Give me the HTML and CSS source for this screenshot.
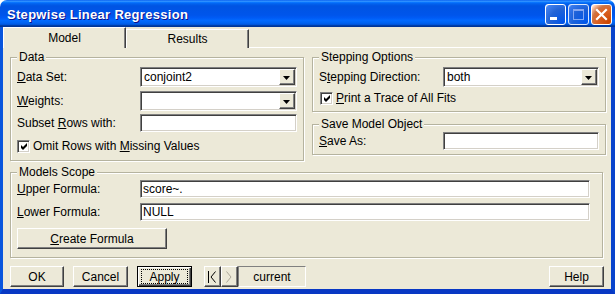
FILE: index.html
```html
<!DOCTYPE html>
<html>
<head>
<meta charset="utf-8">
<link rel="stylesheet" href="styles.css">
</head>
<body>
<div class="window">
  <div class="titlebar">
    <span class="title">Stepwise Linear Regression</span>
    <div class="caption">
      <span class="cbtn min"><svg width="19" height="19" viewBox="0 0 19 19"><rect x="4" y="12" width="7" height="3" fill="#fff"/></svg></span>
      <span class="cbtn max"><svg width="19" height="19" viewBox="0 0 19 19"><rect x="4.5" y="4.5" width="10" height="10" fill="none" stroke="#9cb6f2" stroke-width="1"/><rect x="4" y="4" width="11" height="2" fill="#9cb6f2"/></svg></span>
      <span class="cbtn close"><svg width="19" height="19" viewBox="0 0 19 19"><path d="M5 5 L14 14 M14 5 L5 14" stroke="#fff" stroke-width="2.2" stroke-linecap="square"/></svg></span>
    </div>
  </div>
  <div class="frame">
    <div class="tabs">
      <div class="tab active">Model</div>
      <div class="tab">Results</div>
      <div class="tabfill"></div>
    </div>
    <div class="page">
      <div class="toprow">
        <fieldset class="group data">
          <legend>Data</legend>
          <div class="row r-combo">
            <span class="lbl"><u>D</u>ata Set:</span>
            <div class="field combo w157"><span class="val">conjoint2</span><span class="drop"><svg width="7" height="4" viewBox="0 0 7 4"><polygon points="0,0 7,0 3.5,4" fill="#000"/></svg></span></div>
          </div>
          <div class="row r-combo gap4">
            <span class="lbl"><u>W</u>eights:</span>
            <div class="field combo w157"><span class="val"></span><span class="drop"><svg width="7" height="4" viewBox="0 0 7 4"><polygon points="0,0 7,0 3.5,4" fill="#000"/></svg></span></div>
          </div>
          <div class="row r-entry gap3">
            <span class="lbl">Subset <u>R</u>ows with:</span>
            <div class="field entry w157"></div>
          </div>
          <div class="row r-check gap5">
            <span class="check"><svg width="9" height="9" viewBox="0 0 9 9"><polygon points="1,3 3,5 7,1 7,4 3,8 1,6" fill="#000"/></svg></span>
            <span>Omit Rows with <u>M</u>issing Values</span>
          </div>
        </fieldset>
        <div class="rightcol">
          <fieldset class="group stepping">
            <legend>Stepping Options</legend>
            <div class="row r-combo">
              <span class="lbl wide">S<u>t</u>epping Direction:</span>
              <div class="field combo w156"><span class="val">both</span><span class="drop"><svg width="7" height="4" viewBox="0 0 7 4"><polygon points="0,0 7,0 3.5,4" fill="#000"/></svg></span></div>
            </div>
            <div class="row r-check gap2">
              <span class="check"><svg width="9" height="9" viewBox="0 0 9 9"><polygon points="1,3 3,5 7,1 7,4 3,8 1,6" fill="#000"/></svg></span>
              <span><u>P</u>rint a Trace of All Fits</span>
            </div>
          </fieldset>
          <fieldset class="group save">
            <legend>Save Model Object</legend>
            <div class="row r-entry">
              <span class="lbl wide"><u>S</u>ave As:</span>
              <div class="field entry w156"></div>
            </div>
          </fieldset>
        </div>
      </div>
      <fieldset class="group scope">
        <legend>Models Scope</legend>
        <div class="row r-entry">
          <span class="lbl"><u>U</u>pper Formula:</span>
          <div class="field entry w450"><span class="val">score~.</span></div>
        </div>
        <div class="row r-entry gap5">
          <span class="lbl"><u>L</u>ower Formula:</span>
          <div class="field entry w450"><span class="val">NULL</span></div>
        </div>
        <div class="row gap7">
          <span class="btn create"><u>C</u>reate Formula</span>
        </div>
      </fieldset>
    </div>
    <div class="bottombar">
      <span class="btn b55">OK</span>
      <span class="btn b55">Cancel</span>
      <span class="btn b55 default"><span class="focus">Apply</span></span>
      <span class="nav">
        <span class="btn nb"><svg width="9" height="12" viewBox="0 0 9 12"><path d="M0.5 0 V12 M7.5 0.5 L3 6 L7.5 11.5" stroke="#000" fill="none" stroke-width="1"/></svg></span>
        <span class="btn nb"><svg width="9" height="12" viewBox="0 0 9 12"><path d="M1.5 0.5 L6 6 L1.5 11.5" stroke="#aca899" fill="none" stroke-width="1"/></svg></span>
        <span class="panel">current</span>
      </span>
      <span class="btn b55 help">Help</span>
    </div>
  </div>
</div>
</body>
</html>
```
FILE: styles.css
```css
* { box-sizing: border-box; }
html, body { margin: 0; padding: 0; background: #fff; }
body {
  font-family: "Liberation Sans", Arial, sans-serif;
  font-size: 12px;
  color: #000;
}
.window {
  width: 615px;
  height: 294px;
  display: flex;
  flex-direction: column;
  overflow: hidden;
  border-radius: 7px 7px 0 0;
}
.titlebar {
  height: 27px;
  flex: none;
  display: flex;
  align-items: center;
  padding: 1px 3px 0 7px;
  background: linear-gradient(to bottom, #0058ee 0%, #3593ff 4%, #288eff 6%, #127dff 8%, #036ffc 10%, #0262ee 14%, #0057e5 20%, #0054e3 24%, #0055eb 56%, #005bf5 66%, #026afe 76%, #0062ef 86%, #0052d6 92%, #0040ab 94%, #003092 100%);
}
.title {
  color: #fff;
  font-weight: bold;
  font-size: 13px;
  letter-spacing: 0.3px;
  text-shadow: 1px 1px #0f1089;
  flex: 1;
}
.caption { display: flex; align-items: center; }
.cbtn {
  width: 21px;
  height: 21px;
  border: 1px solid #fff;
  border-radius: 3px;
  display: flex;
  background: radial-gradient(circle at 90% 90%, #0054e9 0%, #2263d5 55%, #4482f0 90%, #fff 100%);
}
.cbtn.max { margin-left: 2px; opacity: 0.85; }
.cbtn.close {
  margin-left: 2px;
  background: radial-gradient(circle at 90% 90%, #cc4600 0%, #dc6527 55%, #cd7546 70%, #ffccb2 90%, #fff 100%);
}
.frame {
  flex: 1;
  display: flex;
  flex-direction: column;
  background: #ece9d8;
  border-style: solid;
  border-color: #0855dd #0843cc #0838c4 #0855dd;
  border-width: 0 4px 5px 3px;
}
.tabs {
  height: 21px;
  flex: none;
  display: flex;
  align-items: flex-end;
}
.tab {
  width: 123px;
  height: 21px;
  display: flex;
  align-items: center;
  justify-content: center;
  border-top: 1px solid #fff;
  border-left: 1px solid #fff;
  border-right: 1px solid #404040;
  box-shadow: inset -1px 0 #808080;
  padding-bottom: 1px;
}
.tab + .tab { height: 19px; padding-bottom: 0; }
.tabfill { flex: 1; border-bottom: 1px solid #fff; height: 1px; }
.page {
  flex: none;
  padding: 2px 0 0 7px;
  display: flex;
  flex-direction: column;
}
.toprow { display: flex; gap: 8px; align-items: flex-start; }
.rightcol { display: flex; flex-direction: column; }
fieldset.group {
  margin: 0;
  min-width: 0;
  border: 1px solid #b5b39f;
  box-shadow: 1px 1px 0 #fff, inset 1px 1px 0 #fff;
  padding: 3px 5px 5px 6px;
}
legend {
  padding: 0 2px;
  line-height: 14px;
  background: #ece9d8;
}
.data { width: 294px; }
.stepping { width: 294px; padding-bottom: 4px !important; }
.save { width: 294px; margin-top: 5px !important; padding: 1px 5px 4px 6px !important; }
.scope { width: 593px; margin-top: 4px !important; padding: 1px 5px 8px 6px !important; }
.row { display: flex; align-items: center; }
.gap2 { margin-top: 2px; }
.gap3 { margin-top: 3px; }
.gap4 { margin-top: 4px; }
.gap5 { margin-top: 5px; }
.gap7 { margin-top: 7px; }
.r-check { height: 18px; gap: 3px; }
.stepping .r-check { padding-left: 1px; }
.lbl { width: 123px; flex: none; white-space: nowrap; }
.lbl.wide { width: 124px; }
.field {
  background: #fff;
  border: 1px solid;
  border-color: #808080 #fff #fff #808080;
  box-shadow: inset 1px 1px #404040, inset -1px -1px #d4d0c8;
  display: flex;
  align-items: center;
}
.combo { height: 20px; padding: 1px; }
.entry { height: 18px; }
.val { flex: 1; padding-left: 2px; white-space: nowrap; }
.w157 { width: 157px; }
.w156 { width: 156px; }
.w450 { width: 450px; }
.drop {
  width: 16px;
  height: 16px;
  flex: none;
  background: #ece9d8;
  border: 1px solid;
  border-color: #fff #404040 #404040 #fff;
  box-shadow: inset -1px -1px #808080;
  display: flex;
  align-items: center;
  justify-content: center;
  padding: 1px 1px 0 0;
}
.check {
  width: 13px;
  height: 13px;
  flex: none;
  background: #fff;
  border: 1px solid;
  border-color: #808080 #fff #fff #808080;
  box-shadow: inset 1px 1px #404040, inset -1px -1px #d4d0c8;
  display: flex;
  align-items: center;
  justify-content: center;
  padding: 1px 0 0 1px;
}
.btn {
  height: 21px;
  display: flex;
  align-items: center;
  justify-content: center;
  background: #ece9d8;
  border: 1px solid;
  border-color: #fff #404040 #404040 #fff;
  box-shadow: inset -1px -1px #808080;
  white-space: nowrap;
}
.create { width: 150px; }
.bottombar {
  margin-top: 8px;
  height: 21px;
  display: flex;
  align-items: stretch;
  padding: 0 7px;
  gap: 9px;
}
.b55 { width: 54px; }
.b55 + .b55 { width: 55px; }
.btn.default {
  border-color: #000;
  box-shadow: inset 1px 1px #fff, inset -1px -1px #404040, inset -2px -2px #808080;
  padding: 2px 3px 2px 3px;
}
.focus {
  flex: 1;
  align-self: stretch;
  border: 1px dotted #000;
  display: flex;
  align-items: center;
  justify-content: center;
}
.nav { display: flex; margin-left: 3px; }
.nb { width: 17px; }
.panel {
  width: 68px;
  display: flex;
  align-items: center;
  justify-content: center;
  border: 1px solid;
  border-color: #808080 #fff #fff #808080;
}
.help { margin-left: auto; width: 55px !important; }
u { text-decoration-thickness: 1px; text-underline-offset: 1px; }
```
